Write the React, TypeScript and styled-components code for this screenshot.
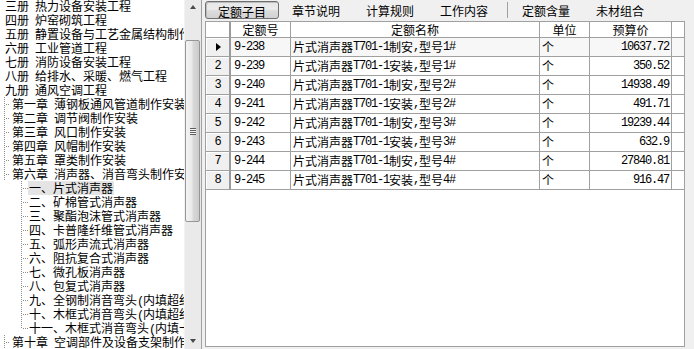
import React from 'react';
import styled, { createGlobalStyle, css } from 'styled-components';

const GlobalStyle = createGlobalStyle`
  html, body { margin: 0; padding: 0; background: #f0f0f0; }
  body {
    font-family: "Noto Sans CJK SC", "Liberation Sans", sans-serif;
    font-size: 12px;
    color: #000;
  }
`;

const Half = styled.span`
  font-family: "Liberation Mono", monospace;
  font-size: 12px;
  letter-spacing: -1.2px;
  white-space: pre;
`;

function Mixed({ text }: { text: string }) {
  const parts = text.match(/[\x00-\x7f]+|[^\x00-\x7f]+/g) || [];
  return (
    <>
      {parts.map((p, i) =>
        /^[\x00-\x7f]/.test(p) ? <Half key={i}>{p}</Half> : <React.Fragment key={i}>{p}</React.Fragment>
      )}
    </>
  );
}

const Window = styled.div`
  width: 694px;
  height: 349px;
  display: flex;
  overflow: hidden;
  background: #f0f0f0;
`;

/* ---------- left tree ---------- */
const LeftPane = styled.div`
  width: 202px;
  box-sizing: border-box;
  display: flex;
  border-right: 1px solid #a0a0a0;
  background: #fff;
`;

const TreeView = styled.div`
  width: 184px;
  overflow: hidden;
  background: #fff;
`;

const TreeList = styled.div`
  display: flex;
  flex-direction: column;
  margin-top: -1px;
`;

const dotV = 'repeating-linear-gradient(to bottom, #8e8e8e 0 1px, transparent 1px 2px)';
const dotH = 'repeating-linear-gradient(to right, #8e8e8e 0 1px, transparent 1px 2px)';

const TreeRow = styled.div<{ $level: number; $last?: boolean }>`
  height: 14px;
  line-height: 14px;
  display: flex;
  align-items: center;
  white-space: pre;
  background-repeat: no-repeat;
  ${(p) =>
    p.$level === 0 &&
    css`
      padding-left: 4px;
    `}
  ${(p) =>
    p.$level === 1 &&
    css`
      padding-left: 11px;
      background-image: ${dotV}, ${dotH};
      background-size: 1px 14px, 4px 1px;
      background-position: 4px 0, 6px 7px;
    `}
  ${(p) =>
    p.$level === 2 &&
    css`
      padding-left: 28px;
      background-image: ${dotV}, ${dotH};
      background-size: 1px ${p.$last ? '8px' : '14px'}, 5px 1px;
      background-position: 21px 0, 23px 7px;
    `}
`;

const TreeLabel = styled.span<{ $selected?: boolean }>`
  padding: 0 1px;
  height: 14px;
  line-height: 14px;
  background: ${(p) => (p.$selected ? '#e4e4e4' : 'transparent')};
`;

const VScroll = styled.div`
  width: 17px;
  display: flex;
  flex-direction: column;
  background: #eaeaea;
  border-left: 1px solid #f2f2f2;
  box-sizing: border-box;
`;

const ScrollBtn = styled.div<{ $h: number }>`
  height: ${(p) => p.$h}px;
  display: flex;
  align-items: center;
  justify-content: center;
  flex-shrink: 0;
`;

const Arrow = styled.span<{ $dir: 'up' | 'down' }>`
  width: 0;
  height: 0;
  border-left: 3.5px solid transparent;
  border-right: 3.5px solid transparent;
  ${(p) =>
    p.$dir === 'up'
      ? css`
          border-bottom: 4px solid #4a4a4a;
        `
      : css`
          border-top: 4px solid #4a4a4a;
        `}
`;

const TrackGap = styled.div<{ $h?: number }>`
  ${(p) => (p.$h ? `height: ${p.$h}px; flex-shrink: 0;` : 'flex: 1;')}
`;

const Thumb = styled.div`
  height: 182px;
  flex-shrink: 0;
  margin: 0 1px 0 0;
  box-sizing: border-box;
  border: 1px solid #969696;
  border-radius: 2px;
  background: linear-gradient(to right, #f4f4f4 0%, #e9e9e9 45%, #d8d8d8 55%, #cbcbcb 100%);
  display: flex;
  align-items: center;
  justify-content: center;
`;

const Grip = styled.span`
  width: 6px;
  height: 7px;
  background: repeating-linear-gradient(to bottom, #5c5c5c 0 1px, #f6f6f6 1px 2px);
`;

/* ---------- right side ---------- */
const RightPane = styled.div`
  flex: 1;
  margin-left: 3px;
  margin-right: 9px;
  display: flex;
  flex-direction: column;
`;

const TabBar = styled.div`
  height: 21px;
  box-sizing: border-box;
  padding-top: 1px;
  display: flex;
  align-items: flex-start;
`;

const Tab = styled.div<{ $active?: boolean }>`
  width: 74px;
  height: 18px;
  box-sizing: border-box;
  display: flex;
  align-items: center;
  justify-content: center;
  border: 1px solid transparent;
  border-radius: 3px;
  white-space: nowrap;
  ${(p) =>
    p.$active &&
    css`
      border-color: #6f6f6f;
      padding-top: 3px;
      background: linear-gradient(to bottom, #e6e6e6 0%, #ececec 45%, #dcdcdc 55%, #d2d2d2 100%);
      box-shadow: inset 1px 1px 0 #bdbdbd;
    `}
`;

const TabSep = styled.div`
  width: 1px;
  height: 16px;
  margin: 1px 1px 0 6px;
  background: #a0a0a0;
`;

const GridBox = styled.div`
  flex: 1;
  margin-bottom: 2px;
  background: #fff;
  border: 1px solid #a0a0a0;
  display: flex;
  flex-direction: column;
  overflow: hidden;
`;

const GridRow = styled.div<{ $header?: boolean; $current?: boolean }>`
  display: grid;
  grid-template-columns: 25px 60px 249px 50px 82px 12px;
  height: ${(p) => (p.$header ? 16 : 19)}px;
  line-height: 14px;
  background: ${(p) => (p.$current ? '#f7f7f7' : '#fff')};
`;

const Cell = styled.div<{ $align?: 'left' | 'center' | 'right'; $pad?: number; $last?: boolean }>`
  box-sizing: border-box;
  display: flex;
  align-items: center;
  justify-content: ${(p) => (p.$align === 'center' ? 'center' : p.$align === 'right' ? 'flex-end' : 'flex-start')};
  padding: 0 ${(p) => p.$pad ?? 2}px;
  border-right: ${(p) => (p.$last ? 'none' : '1px solid #a0a0a0')};
  border-bottom: 1px solid #a0a0a0;
  white-space: pre;
  overflow: hidden;
`;

const Indicator = styled(Cell)<{ $head?: boolean }>`
  justify-content: center;
  padding: 0;
  border-right: 2px solid #9a9a9a;
  background: ${(p) => (p.$head ? '#fff' : '#f0f0f0')};
  box-shadow: ${(p) => (p.$head ? 'none' : 'inset 1px 1px 0 #ffffff')};
`;

const CurrentMark = styled.span`
  width: 0;
  height: 0;
  margin-left: 1px;
  border-left: 5px solid #000;
  border-top: 4.5px solid transparent;
  border-bottom: 4.5px solid transparent;
`;

type TreeItem = { text: string; level: number; selected?: boolean; last?: boolean };

const tree: TreeItem[] = [
  { text: '三册 热力设备安装工程', level: 0 },
  { text: '四册 炉窑砌筑工程', level: 0 },
  { text: '五册 静置设备与工艺金属结构制作安装工程', level: 0 },
  { text: '六册 工业管道工程', level: 0 },
  { text: '七册 消防设备安装工程', level: 0 },
  { text: '八册 给排水、采暖、燃气工程', level: 0 },
  { text: '九册 通风空调工程', level: 0 },
  { text: '第一章 薄钢板通风管道制作安装', level: 1 },
  { text: '第二章 调节阀制作安装', level: 1 },
  { text: '第三章 风口制作安装', level: 1 },
  { text: '第四章 风帽制作安装', level: 1 },
  { text: '第五章 罩类制作安装', level: 1 },
  { text: '第六章 消声器、消音弯头制作安装', level: 1 },
  { text: '一、片式消声器', level: 2, selected: true },
  { text: '二、矿棉管式消声器', level: 2 },
  { text: '三、聚酯泡沫管式消声器', level: 2 },
  { text: '四、卡普隆纤维管式消声器', level: 2 },
  { text: '五、弧形声流式消声器', level: 2 },
  { text: '六、阻抗复合式消声器', level: 2 },
  { text: '七、微孔板消声器', level: 2 },
  { text: '八、包复式消声器', level: 2 },
  { text: '九、全钢制消音弯头(内填超细玻璃棉)', level: 2 },
  { text: '十、木框式消音弯头(内填超细玻璃棉)', level: 2 },
  { text: '十一、木框式消音弯头(内填卡普隆纤维)', level: 2, last: true },
  { text: '第十章 空调部件及设备支架制作安装', level: 1 },
];

const rows = [
  ['9-238', '片式消声器T701-1制安,型号1#', '个', '10637.72'],
  ['9-239', '片式消声器T701-1安装,型号1#', '个', '350.52'],
  ['9-240', '片式消声器T701-1制安,型号2#', '个', '14938.49'],
  ['9-241', '片式消声器T701-1安装,型号2#', '个', '491.71'],
  ['9-242', '片式消声器T701-1制安,型号3#', '个', '19239.44'],
  ['9-243', '片式消声器T701-1安装,型号3#', '个', '632.9'],
  ['9-244', '片式消声器T701-1制安,型号4#', '个', '27840.81'],
  ['9-245', '片式消声器T701-1安装,型号4#', '个', '916.47'],
];

const tabsA = ['定额子目', '章节说明', '计算规则', '工作内容'];
const tabsB = ['定额含量', '未材组合'];

export default function App() {
  return (
    <>
      <GlobalStyle />
      <Window>
        <LeftPane>
          <TreeView>
            <TreeList>
              {tree.map((t, i) => (
                <TreeRow key={i} $level={t.level} $last={t.last}>
                  <TreeLabel $selected={t.selected}>
                    <Mixed text={t.text} />
                  </TreeLabel>
                </TreeRow>
              ))}
            </TreeList>
          </TreeView>
          <VScroll>
            <ScrollBtn $h={13}>
              <Arrow $dir="up" />
            </ScrollBtn>
            <TrackGap $h={27} />
            <Thumb>
              <Grip />
            </Thumb>
            <TrackGap />
            <ScrollBtn $h={17}>
              <Arrow $dir="down" />
            </ScrollBtn>
          </VScroll>
        </LeftPane>
        <RightPane>
          <TabBar>
            {tabsA.map((t, i) => (
              <Tab key={t} $active={i === 0}>
                {t}
              </Tab>
            ))}
            <TabSep />
            {tabsB.map((t) => (
              <Tab key={t}>{t}</Tab>
            ))}
          </TabBar>
          <GridBox>
            <GridRow $header>
              <Indicator $head />
              <Cell $align="center">定额号</Cell>
              <Cell $align="center">定额名称</Cell>
              <Cell $align="center">单位</Cell>
              <Cell $align="center">预算价</Cell>
              <Cell $last />
            </GridRow>
            {rows.map((r, i) => (
              <GridRow key={r[0]} $current={i === 0}>
                <Indicator>{i === 0 ? <CurrentMark /> : <Half>{String(i + 1)}</Half>}</Indicator>
                <Cell $pad={3}>
                  <Mixed text={r[0]} />
                </Cell>
                <Cell>
                  <Mixed text={r[1]} />
                </Cell>
                <Cell>{r[2]}</Cell>
                <Cell $align="right">
                  <Mixed text={r[3]} />
                </Cell>
                <Cell $last />
              </GridRow>
            ))}
          </GridBox>
        </RightPane>
      </Window>
    </>
  );
}
